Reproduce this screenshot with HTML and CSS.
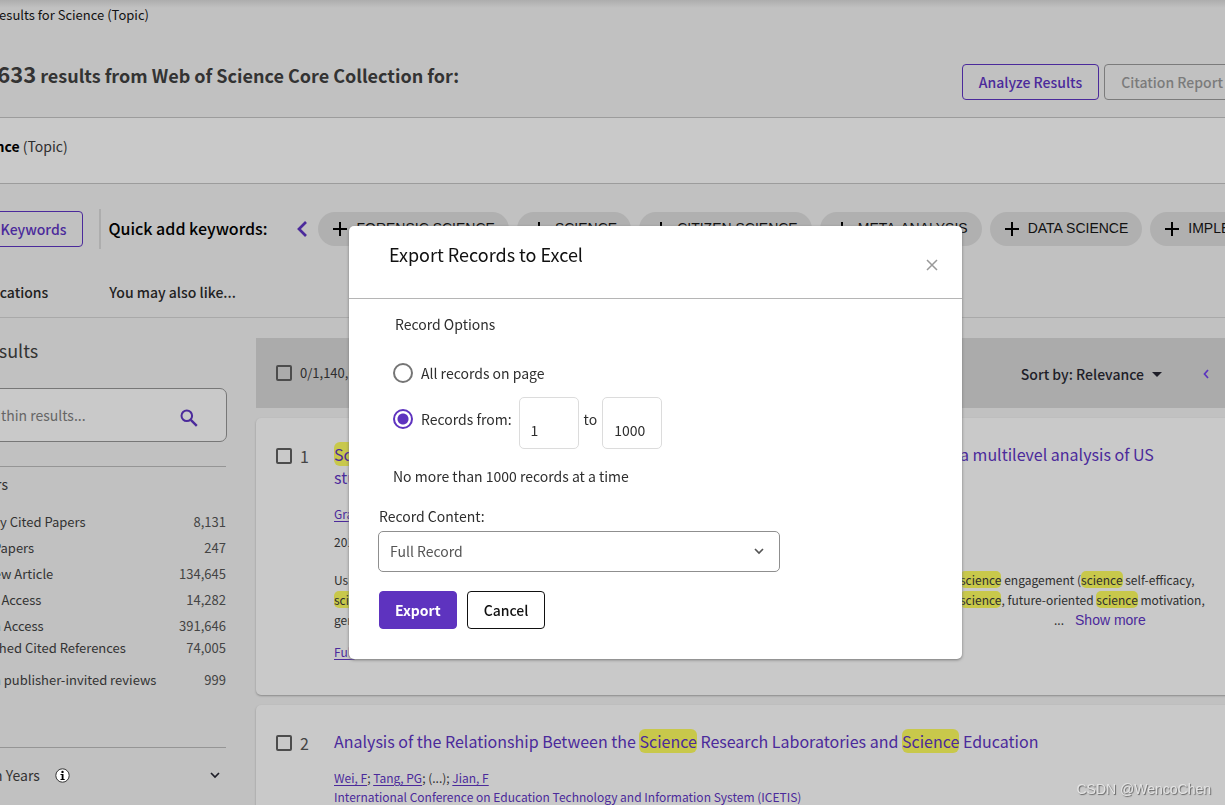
FILE: index.html
```html
<!DOCTYPE html>
<html lang="en">
<head>
<meta charset="utf-8">
<title>Web of Science - Export Records to Excel</title>
<link rel="stylesheet" href="styles.css">
</head>
<body>
<div class="page">
  <header class="summary">
    <div class="breadcrumb">Results for Science (Topic)</div>
    <div class="summary-row">
      <h1 class="headline"><span class="count">1,140,633</span> results from Web of Science Core Collection for:</h1>
      <div class="summary-actions">
        <button class="btn btn-outline" type="button">Analyze Results</button>
        <button class="btn btn-muted" type="button">Citation Report</button>
      </div>
    </div>
  </header>

  <div class="query"><span class="query-text"><strong>Science</strong> (Topic)</span></div>

  <div class="keywords">
    <button class="btn btn-outline add-keywords" type="button">Add Keywords</button>
    <div class="quick">
      <span class="quick-label">Quick add keywords:</span>
      <button class="icon-btn prev" type="button" aria-label="Previous keywords"><svg width="12" height="16" viewBox="0 0 12 16"><path d="M10 1 3 8l7 7" fill="none" stroke="#4b2a9b" stroke-width="2.700"/></svg></button>
    </div>
    <div class="chips">
      <button class="chip" type="button"><svg width="14" height="14" viewBox="0 0 14 14"><path d="M7 0v14M0 7h14" stroke="#000" stroke-width="2"/></svg><span>FORENSIC SCIENCE</span></button>
      <button class="chip" type="button"><svg width="14" height="14" viewBox="0 0 14 14"><path d="M7 0v14M0 7h14" stroke="#000" stroke-width="2"/></svg><span>SCIENCE</span></button>
      <button class="chip" type="button"><svg width="14" height="14" viewBox="0 0 14 14"><path d="M7 0v14M0 7h14" stroke="#000" stroke-width="2"/></svg><span>CITIZEN SCIENCE</span></button>
      <button class="chip" type="button"><svg width="14" height="14" viewBox="0 0 14 14"><path d="M7 0v14M0 7h14" stroke="#000" stroke-width="2"/></svg><span>META-ANALYSIS</span></button>
      <button class="chip" type="button"><svg width="14" height="14" viewBox="0 0 14 14"><path d="M7 0v14M0 7h14" stroke="#000" stroke-width="2"/></svg><span>DATA SCIENCE</span></button>
      <button class="chip" type="button"><svg width="14" height="14" viewBox="0 0 14 14"><path d="M7 0v14M0 7h14" stroke="#000" stroke-width="2"/></svg><span>IMPLEMENTATION</span></button>
    </div>
  </div>

  <nav class="tabs">
    <a class="tab tab-first" href="#publications">Publications</a>
    <a class="tab" href="#related">You may also like...</a>
  </nav>

  <div class="content">
    <aside class="sidebar">
      <h2 class="side-title">Refine results</h2>
      <div class="search">
        <input class="search-input" type="text" placeholder="Search within results..." aria-label="Search within results">
        <button class="icon-btn" type="button" aria-label="Search"><svg width="18" height="18" viewBox="0 0 18 18"><circle cx="6.800" cy="6.800" r="5.300" fill="none" stroke="#4b2a9b" stroke-width="2"/><path d="m10.800 10.800 6 6" stroke="#4b2a9b" stroke-width="2.400"/></svg></button>
      </div>
      <section class="filters">
        <h3 class="filter-title">Quick Filters</h3>
        <ul class="filter-list">
          <li><span>Highly Cited Papers</span><span class="num">8,131</span></li>
          <li><span>Hot Papers</span><span class="num">247</span></li>
          <li><span>Review Article</span><span class="num">134,645</span></li>
          <li><span>Early Access</span><span class="num">14,282</span></li>
          <li><span>Open Access</span><span class="num">391,646</span></li>
          <li class="tight"><span>Enriched Cited References</span><span class="num">74,005</span></li>
          <li class="loose"><span>Open publisher-invited reviews</span><span class="num">999</span></li>
        </ul>
      </section>
      <section class="years">
        <span>Publication Years</span>
        <svg class="info" width="15" height="15" viewBox="0 0 15 15"><circle cx="7.500" cy="7.500" r="6.700" fill="#fff" stroke="#333"/><circle cx="7.500" cy="3.900" r="1.200" fill="#000"/><path d="M5.500 6h3v5h1.200v1H5.500v-1h1.200V7H5.500z" fill="#000"/></svg>
        <svg class="chev" width="10" height="7" viewBox="0 0 10 7"><path d="m1 1 4 4 4-4" fill="none" stroke="#1e1e28" stroke-width="1.700"/></svg>
      </section>
    </aside>

    <main class="results">
      <div class="toolbar">
        <label class="check"><input type="checkbox">0/1,140,633</label>
        <div class="toolbar-end">
          <button class="sort" type="button">Sort by: Relevance<svg width="10" height="5" viewBox="0 0 10 5"><path d="M0 0h10L5 5z" fill="#1e1e28"/></svg></button>
          <button class="icon-btn" type="button" aria-label="Previous page"><svg width="6" height="10" viewBox="0 0 6 10"><path d="M5 1 1.500 5 5 9" fill="none" stroke="#5b33bf" stroke-width="1.700"/></svg></button>
        </div>
      </div>

      <article class="card">
        <label class="check num-check"><input type="checkbox">1</label>
        <div class="record">
          <h2 class="title"><a class="split" href="#r1"><span><mark>Science</mark></span><span>a multilevel analysis of US</span><span>students</span></a></h2>
          <p class="authors"><a href="#a1">Grabau</a></p>
          <p class="date">2017</p>
          <p class="abstract split"><span>Using</span><span><mark>science</mark> engagement (<mark>science</mark> self-efficacy,</span><span><mark>science</mark></span><span><mark>science</mark>, future-oriented <mark>science</mark> motivation,</span><span>general</span><span class="more">...<button class="show-more" type="button">Show more</button></span></p>
          <p class="links"><a href="#full">Full</a></p>
        </div>
      </article>

      <article class="card">
        <label class="check num-check"><input type="checkbox">2</label>
        <div class="record">
          <h2 class="title"><a href="#r2">Analysis of the Relationship Between the <mark>Science</mark> Research Laboratories and <mark>Science</mark> Education</a></h2>
          <p class="authors"><a href="#a2">Wei, F</a>; <a href="#a3">Tang, PG</a>; (...); <a href="#a4">Jian, F</a></p>
          <p class="source">International Conference on Education Technology and Information System (ICETIS)</p>
        </div>
      </article>
    </main>
  </div>
</div>

<div class="overlay">
  <form class="dialog" role="dialog" aria-labelledby="dialog-title">
    <div class="dialog-head">
      <h2 class="dialog-title" id="dialog-title">Export Records to Excel</h2>
      <button class="icon-btn" type="button" aria-label="Close"><svg width="12" height="12" viewBox="0 0 12 12"><path d="m1 1 10 10M11 1 1 11" stroke="#999" stroke-width="1.500"/></svg></button>
    </div>
    <div class="dialog-body">
      <fieldset class="options">
        <legend>Record Options</legend>
        <label class="radio"><input type="radio" name="range">All records on page</label>
        <div class="range">
          <label class="radio"><input type="radio" name="range" checked>Records from:</label>
          <input class="range-input" type="text" value="1" aria-label="First record">
          <label for="last">to</label>
          <input class="range-input" id="last" type="text" value="1000">
        </div>
        <p class="note">No more than 1000 records at a time</p>
      </fieldset>
      <label class="select-label" for="content">Record Content:</label>
      <div class="select-wrap">
        <select class="select" id="content"><option>Full Record</option></select>
        <svg class="select-chev" width="10" height="7" viewBox="0 0 10 7"><path d="m1 1 4 4 4-4" fill="none" stroke="#555" stroke-width="1.700"/></svg>
      </div>
      <div class="dialog-actions">
        <button class="btn btn-primary" type="button">Export</button>
        <button class="btn btn-cancel" type="button">Cancel</button>
      </div>
    </div>
  </form>
</div>
<div class="watermark">CSDN @WencoChen</div>
</body>
</html>
```
FILE: styles.css
```css
* { box-sizing: border-box; }

body {
  margin: 0;
  height: 100vh;
  overflow: hidden;
  background: #c1c1c1;
  color: #2e2e2e;
  font: 14px/20px "Noto Sans CJK SC", "Noto Sans", sans-serif;
}

h1, h2, h3, p, ul, fieldset { margin: 0; padding: 0; border: 0; font-weight: 400; }
ul { list-style: none; }
button, input, select { font: inherit; color: inherit; }
button { cursor: pointer; }
a { color: #4b2a9b; text-decoration: none; }
mark { background: #c8c84b; color: inherit; border-radius: 5px; }
svg { flex: none; display: block; }

.page { height: 100vh; overflow: hidden; }

.btn {
  height: 36px;
  padding: 0 16px;
  border: 1px solid;
  border-radius: 4px;
  background: transparent;
  font-weight: 500;
  white-space: nowrap;
}
.btn-outline { color: #4b2a9b; }
.btn-muted { color: #7b7b7b; }
.icon-btn { display: flex; padding: 0; border: 0; background: none; }

.summary {
  height: 118px;
  padding-top: 5px;
  border-bottom: 1px solid #9c9c9c;
  background: linear-gradient(#adadad, #c1c1c1 8px);
}
.breadcrumb { margin-left: -9px; font-size: 13px; color: #111; }
.summary-row { display: flex; justify-content: space-between; padding-top: 33px; }
.headline {
  display: flex;
  align-items: baseline;
  gap: 4px;
  height: 36px;
  margin-left: -69px;
  font-size: 18px;
  line-height: 30px;
  font-weight: 700;
  color: #333;
  white-space: nowrap;
}
.count { font-size: 22px; }
.summary-actions { display: flex; gap: 5px; margin: 6px -15px 0 0; }

.query {
  height: 66px;
  padding-top: 18px;
  border-bottom: 1px solid #9c9c9c;
  background: #c9c9c9;
}
.query-text { margin-left: -33px; }
.query strong { color: #000; }

.keywords { display: flex; align-items: center; height: 90px; }
.add-keywords { margin-left: -46px; }
.quick {
  display: flex;
  flex: none;
  align-items: center;
  justify-content: space-between;
  width: 209px;
  height: 40px;
  margin: 0 10px 0 16px;
  padding-left: 7px;
  border-left: 2px solid #adadad;
}
.quick-label { padding-bottom: 2px; font-size: 16px; font-weight: 500; color: #000; }
.chips { display: flex; gap: 8px; }
.chip {
  display: flex;
  flex: none;
  align-items: center;
  gap: 9px;
  height: 34px;
  padding: 0 14px 0 15px;
  border: 0;
  border-radius: 17px;
  background: #b0b0b0;
  color: #111;
  font: 14px/20px "Liberation Sans", Arial, sans-serif;
  white-space: nowrap;
}
.chip span { padding-bottom: 2px; }

.tabs {
  display: flex;
  gap: 61px;
  height: 44px;
  padding-top: 8px;
  border-bottom: 1px solid #a9a9a9;
}
.tab { color: #222; font-weight: 500; }
.tab-first { margin-left: -35px; }

.content { display: flex; gap: 29px; }
.sidebar { flex: none; width: 259px; margin-left: -32px; font-size: 13px; color: #333; }
.side-title { margin-left: -43px; padding: 21px 0 26px; font-size: 18px; line-height: 23px; }
.search {
  display: flex;
  align-items: center;
  height: 54px;
  padding: 5px 28px 0 0;
  border: 1px solid #777;
  border-radius: 7px;
  background: #c9c9c9;
}
.search-input {
  flex: 1;
  min-width: 0;
  margin: 0 0 5px -31px;
  padding: 0;
  border: 0;
  background: none;
  font-size: 14px;
}
.search-input::placeholder { color: #666; opacity: 1; }
.filters, .years { margin: 24px 1px 0 0; border-top: 1px solid #959595; }
.filter-title { padding: 7px 0 18px; margin-left: -41px; font-size: 14px; }
.filter-list li { display: flex; justify-content: space-between; height: 26px; line-height: 20px; }
.filter-list .tight { margin-top: -4px; }
.filter-list .loose { margin-top: 6px; }
.num { color: #444; }
.years { display: flex; align-items: center; margin-top: 51px; padding-top: 17px; font-size: 14px; }
.years span { margin-left: -40px; }
.info { margin-left: 15px; }
.chev { margin: 0 6px 0 auto; }

.results { flex: 1; min-width: 0; padding-top: 20px; }
.toolbar {
  display: flex;
  align-items: center;
  justify-content: space-between;
  height: 70px;
  padding: 0 16px 0 20px;
  background: #ababab;
}
.toolbar-end { display: flex; align-items: center; gap: 41px; padding-top: 2px; }
.sort {
  display: flex;
  align-items: center;
  gap: 8px;
  padding: 0;
  border: 0;
  background: none;
  color: #1e1e28;
  font-weight: 500;
}
.check { display: flex; align-items: center; gap: 8px; font-size: 13px; }
.check input {
  appearance: none;
  width: 16px;
  height: 16px;
  margin: 0;
  border: 2px solid #4c4c4c;
  border-radius: 2px;
}
.card {
  display: flex;
  min-height: 277px;
  margin: 10px -8px 0 0;
  padding: 25px 0 0 20px;
  border-radius: 5px;
  background: #c9c9c9;
  box-shadow: 0 1px 2px #8a8a8a;
}
.num-check { flex: none; align-self: flex-start; width: 58px; height: 26px; font-size: 16px; color: #444; }
.record { flex: 1; min-width: 0; font-size: 12px; white-space: nowrap; }
.split { display: grid; grid-template-columns: 626px 1fr; }
.title { font-size: 16px; line-height: 23px; }
.title mark { border-radius: 6px; }
.authors { margin-top: 15px; line-height: 20px; }
.authors a, .links a { text-decoration: underline; text-underline-offset: 2px; }
.date { margin-top: 8px; }
.abstract { margin-top: 18px; }
.more { padding-left: 94px; }
.show-more {
  margin-left: 11px;
  padding: 0;
  border: 0;
  background: none;
  color: #4b2a9b;
  font: 14px/20px "Liberation Sans", Arial, sans-serif;
}
.links { margin-top: 12px; }
.source { color: #4b2a9b; line-height: 18px; }

.overlay {
  position: fixed;
  inset: 0;
  display: flex;
  align-items: center;
  justify-content: center;
  padding: 80px 0 0 86px;
}
.dialog {
  width: 613px;
  max-width: 100%;
  border-radius: 5px;
  background: #fff;
  box-shadow: 0 1px 3px #777;
}
.dialog-head {
  display: flex;
  align-items: center;
  justify-content: space-between;
  height: 73px;
  padding: 5px 24px 0 40px;
  border-bottom: 1px solid #b5b5b5;
}
.dialog-title { padding-bottom: 21px; font-size: 18px; line-height: 24px; color: #111; }
.dialog-body { padding: 15px 30px 30px; }
.options { padding-left: 14px; }
.options legend { padding: 0 2px; }
.radio { display: flex; align-items: center; gap: 8px; }
.options > .radio { margin-top: 29px; }
.radio input {
  appearance: none;
  width: 20px;
  height: 20px;
  margin: 0;
  border: 2px solid #757575;
  border-radius: 50%;
}
.radio input:checked {
  border-color: #5e33bf;
  background: radial-gradient(circle, #5e33bf 5px, transparent 6px);
}
.range { display: flex; align-items: center; gap: 5px; margin-top: 14px; }
.range .radio { margin: -8px 2px 0 0; }
.range > label[for] { margin-top: -8px; }
.range-input {
  width: 60px;
  height: 52px;
  padding: 14px 11px 0;
  border: 1px solid #dcdcdc;
  border-radius: 5px;
}
.note { margin-top: 17px; }
.select-label { display: block; margin-top: 20px; }
.select-wrap { display: grid; align-items: center; width: 402px; max-width: 100%; margin: 5px 0 0 -1px; }
.select-wrap > * { grid-area: 1 / 1; }
.select {
  appearance: none;
  width: 100%;
  height: 41px;
  padding: 0 11px 1px;
  border: 1px solid #8f8f8f;
  border-radius: 5px;
  background: #fff;
  color: #555;
}
.select-chev { justify-self: end; margin-right: 16px; pointer-events: none; }
.dialog-actions { display: flex; gap: 10px; margin-top: 19px; }
.dialog-actions .btn { height: 38px; }
.dialog-actions .btn-primary { padding: 0 15px; border-color: #5e33bf; background: #5e33bf; color: #fff; font-weight: 700; }
.btn-cancel { color: #111; }

.watermark {
  position: fixed;
  right: 14px;
  bottom: 6px;
  color: #e4e4e4;
  font: 14px/20px "Liberation Sans", Arial, sans-serif;
  text-shadow: 1px 1px 1px #666;
}
```
